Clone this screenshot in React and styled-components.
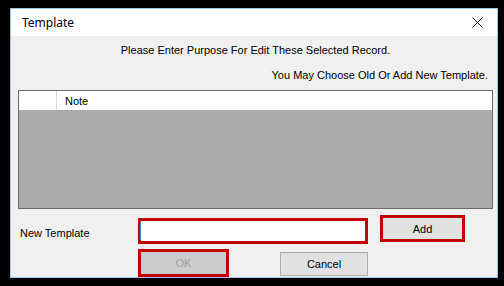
import React from 'react';
import styled, { createGlobalStyle } from 'styled-components';

const GlobalStyle = createGlobalStyle`
  html, body {
    margin: 0;
    padding: 0;
    background: #000;
  }
  * {
    box-sizing: border-box;
  }
`

const Frame = styled.div`
  width: 504px;
  height: 286px;
  background: #000;
  padding: 8px 6px 8px 10px;
`

const Dialog = styled.div`
  width: 488px;
  height: 270px;
  border: 1px solid #9cc6ec;
  background: #f0f0f0;
  display: flex;
  flex-direction: column;
  font-family: "Liberation Sans", Arial, sans-serif;
  font-size: 11px;
  color: #000;
`

const TitleBar = styled.div`
  height: 28px;
  background: #fff;
  display: flex;
  align-items: center;
  justify-content: space-between;
  padding: 0 14px 0 11px;
`

const Title = styled.span`
  font-family: "Noto Sans", "Liberation Sans", sans-serif;
  font-size: 12px;
  color: #000;
`

const CloseBtn = styled.div`
  width: 12px;
  height: 12px;
  display: flex;
  align-items: center;
  justify-content: center;
`

const Content = styled.div`
  flex: 1;
  display: flex;
  flex-direction: column;
  padding: 8px 4px 0 7px;
`

const Message = styled.div`
  line-height: 13px;
  text-align: ${p => p.align || 'center'};
  padding-right: ${p => p.align === 'right' ? '5px' : '0'};
  margin-bottom: ${p => p.gap}px;
`

const GridBox = styled.div`
  height: 119px;
  border: 1px solid #6b6b6b;
  background: #ababab;
  display: flex;
  flex-direction: column;
`

const HeaderRow = styled.div`
  height: 19px;
  background: #fff;
  display: grid;
  grid-template-columns: 38px 1fr;
`

const HeaderCell = styled.div`
  display: flex;
  align-items: center;
  padding-left: 8px;
  border-right: ${p => p.divider ? '1px solid #d9d9d9' : 'none'};
`

const FormArea = styled.div`
  display: grid;
  grid-template-columns: 108px 230px 85px;
  column-gap: 12px;
  row-gap: 5px;
  margin-top: 6px;
`

const FieldLabel = styled.div`
  height: 29px;
  display: flex;
  align-items: center;
  padding-left: 2px;
  padding-top: 6px;
`

const Highlight = styled.div`
  border: 3px solid #c00000;
  height: ${p => p.h}px;
  margin-top: ${p => p.offset || 0}px;
  align-self: start;
`

const TextInput = styled.input`
  width: 100%;
  height: 100%;
  border: none;
  outline: none;
  background: #fff;
  box-shadow: -2px 0 0 -1px #4a90d9;
`

const Button = styled.div`
  height: 100%;
  display: flex;
  align-items: center;
  justify-content: center;
  background: ${p => p.disabled ? '#cccccc' : '#e1e1e1'};
  color: ${p => p.disabled ? '#a0a0a0' : '#000'};
  border: ${p => p.plain ? '1px solid #adadad' : 'none'};
`

const ButtonRow = styled.div`
  grid-column: 2;
  display: flex;
  justify-content: space-between;
  align-items: flex-start;
`

const PlainSlot = styled.div`
  width: ${p => p.w}px;
  height: ${p => p.h}px;
  margin-top: ${p => p.offset || 0}px;
`

export default function App() {
  return (
    <Frame>
      <GlobalStyle />
      <Dialog>
        <TitleBar>
          <Title>Template</Title>
          <CloseBtn>
            <svg width="11" height="11" viewBox="0 0 11 11">
              <path d="M0.5 0.5 L10.5 10.5 M10.5 0.5 L0.5 10.5" stroke="#111" strokeWidth="1" fill="none" />
            </svg>
          </CloseBtn>
        </TitleBar>
        <Content>
          <Message gap={12}>Please Enter Purpose For Edit These Selected Record.</Message>
          <Message align="right" gap={8}>You May Choose Old Or Add New Template.</Message>
          <GridBox>
            <HeaderRow>
              <HeaderCell divider />
              <HeaderCell>Note</HeaderCell>
            </HeaderRow>
          </GridBox>
          <FormArea>
            <FieldLabel>New Template</FieldLabel>
            <Highlight h={26} offset={3}>
              <TextInput type="text" />
            </Highlight>
            <Highlight h={27}>
              <Button>Add</Button>
            </Highlight>
            <ButtonRow>
              <PlainSlot w={91} h={28}>
                <Highlight h={28}>
                  <Button disabled>OK</Button>
                </Highlight>
              </PlainSlot>
              <PlainSlot w={88} h={24} offset={3}>
                <Button plain>Cancel</Button>
              </PlainSlot>
            </ButtonRow>
          </FormArea>
        </Content>
      </Dialog>
    </Frame>
  );
}
